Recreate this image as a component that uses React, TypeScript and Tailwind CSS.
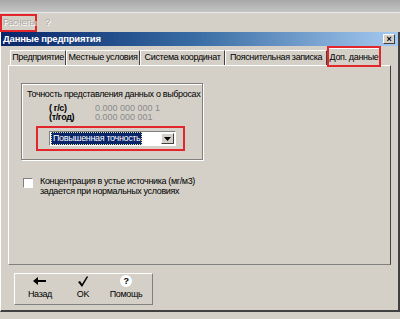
import { useState } from 'react';

const tabs = [
  { label: 'Предприятие', w: 'w-[56px]' },
  { label: 'Местные условия', w: 'w-[74px]' },
  { label: 'Система координат', w: 'w-[85px]' },
  { label: 'Пояснительная записка', w: 'w-[102px]' },
];

function BackIcon() {
  return (
    <svg width="14" height="8" viewBox="0 0 14 8">
      <path d="M0 4 L5 0 L5 3 L13 3 L13 5 L5 5 L5 8 Z" fill="#000" />
    </svg>
  );
}

function CheckIcon() {
  return (
    <svg width="12" height="11" viewBox="0 0 12 11">
      <path d="M1 6 L3 5 L5 8 L10 0 L11 1 L5 11 Z" fill="#000" />
    </svg>
  );
}

function HelpIcon() {
  return (
    <div className="w-[12px] h-[12px] rounded-full bg-white flex items-center justify-center text-[9px] font-bold leading-none text-black">?</div>
  );
}

function App() {
  const [checked, setChecked] = useState(false);

  return (
    <div className="w-[400px] h-[319px] overflow-hidden bg-[#d4d0c8] flex flex-col text-[9px] tracking-[-0.35px] text-black" style={{ fontFamily: '"Liberation Sans", Arial, sans-serif' }}>
      {/* parent app strip */}
      <div className="h-[13px] bg-gradient-to-b from-[#a8a8a8] to-[#c4c4c4] border-b border-[#e8e8e8] shrink-0" />

      {/* menu */}
      <div className="h-[19px] flex items-center shrink-0">
        <div className="h-[18px] w-[37px] border-2 border-[#e3262b] flex items-center pl-[1px] text-[9px] text-[#a9a6a0] [text-shadow:1px_1px_0_#fff] whitespace-nowrap">Расчеты</div>
        <div className="ml-[8px] text-[#a9a6a0] [text-shadow:1px_1px_0_#fff]">?</div>
      </div>

      {/* dialog */}
      <div className="flex-1 flex flex-col border-l border-white border-r-2 border-r-[#404040] border-b-2 border-b-[#404040] mb-[7px]">
        <div className="h-[14px] shrink-0 bg-gradient-to-r from-[#0a246a] via-[#3a6ea5] to-[#a6caf0] flex items-center pl-[2px] pr-[3px]">
          <span className="text-white font-bold text-[9.5px] tracking-[-0.2px]">Данные предприятия</span>
          <div className="ml-auto w-[12px] h-[10px] bg-[#d4d0c8] border border-t-white border-l-white border-r-[#404040] border-b-[#404040] flex items-center justify-center text-[9px] font-bold leading-none">×</div>
        </div>

        <div className="flex-1 flex flex-col px-[7px] pt-[2px]">
          {/* tab strip */}
          <div className="h-[17px] flex items-end shrink-0 pl-[2px]">
            {tabs.map((t) => (
              <div key={t.label} className={`${t.w} h-[15px] flex items-center justify-center border-t border-l border-white border-r border-r-[#404040] whitespace-nowrap`}>{t.label}</div>
            ))}
            <div className="w-[54px] h-[18px] -mb-px flex items-center justify-center border-t border-l border-white border-r border-r-[#404040] bg-[#d4d0c8] relative z-10 whitespace-nowrap">
              Доп. данные
              <div className="absolute -left-[1px] -top-[3px] -right-[1px] -bottom-[1px] border-2 border-[#e3262b]" />
            </div>
          </div>

          {/* tab panel */}
          <div className="h-[200px] shrink-0 border-t border-l border-white border-r border-r-[#404040] border-b border-b-[#808080] pt-[17px] pl-[12px]">
            <div className="w-[182px] h-[77px] border border-[#808080] shadow-[1px_1px_0_#fff,inset_1px_1px_0_#fff] flex flex-col pl-[5px] pt-[5px]">
              <div className="leading-[11px] whitespace-nowrap">Точность представления данных о выбросах</div>
              <div className="flex mt-[4px] pl-[22px] leading-[9px]">
                <div className="w-[46px] font-bold">
                  <div>( г/с)</div>
                  <div>(т/год)</div>
                </div>
                <div className="text-[#8a8a8a] tracking-normal">
                  <div>0.000 000 000 1</div>
                  <div>0.000 000 001</div>
                </div>
              </div>
              <div className="mt-[4px] ml-[9px] w-[149px] h-[25px] border-2 border-[#e3262b] flex items-center pl-[11px]">
                <div className="w-[127px] h-[15px] bg-white border border-t-[#808080] border-l-[#808080] border-r-white border-b-white flex items-center p-[1px]">
                  <span className="bg-[#0a246a] text-white px-[1px] leading-[11px] border border-dotted border-[#e0e0a0] whitespace-nowrap">Повышенная точность</span>
                  <div className="ml-auto w-[13px] h-[11px] bg-[#d4d0c8] border border-t-white border-l-white border-r-[#404040] border-b-[#404040] flex items-center justify-center">
                    <svg width="7" height="4" viewBox="0 0 7 4"><path d="M0 0 H7 L3.5 4 Z" fill="#000" /></svg>
                  </div>
                </div>
              </div>
            </div>

            <div className="flex mt-[16px] ml-[2px]">
              <button
                onClick={() => setChecked(!checked)}
                className="w-[10px] h-[10px] mt-[2px] bg-white border border-t-[#808080] border-l-[#808080] border-r-white border-b-white shrink-0 text-[8px] leading-none"
              >{checked ? '✓' : ''}</button>
              <div className="ml-[7px] leading-[10px]">
                <div>Концентрация в устье источника (мг/м3)</div>
                <div>задается при нормальных условиях</div>
              </div>
            </div>
          </div>

          {/* toolbar */}
          <div className="mt-[8px] ml-[6px] w-[139px] h-[32px] border border-t-white border-l-white border-r-[#808080] border-b-[#808080] flex items-end pb-[3px]">
            <div className="w-[50px] flex flex-col items-center">
              <div className="h-[13px] flex items-center"><BackIcon /></div>
              <span>Назад</span>
            </div>
            <div className="w-[36px] flex flex-col items-center">
              <div className="h-[13px] flex items-center"><CheckIcon /></div>
              <span>OK</span>
            </div>
            <div className="w-[50px] flex flex-col items-center">
              <div className="h-[13px] flex items-center"><HelpIcon /></div>
              <span>Помощь</span>
            </div>
          </div>
        </div>
      </div>
    </div>
  );
}

export default App;
